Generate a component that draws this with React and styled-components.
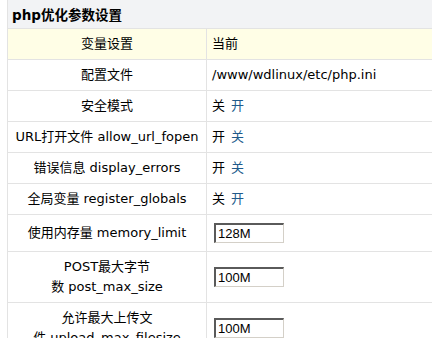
import React from 'react';
import styled, { createGlobalStyle } from 'styled-components';

const GlobalStyle = createGlobalStyle`
html, body {
  margin: 0;
  padding: 0;
  background: #ffffff;
  overflow: hidden;
}
body {
  font-family: "DejaVu Sans", "Noto Sans CJK SC", sans-serif;
  font-size: 13px;
  color: #000000;
}
`;

const Page = styled.div`
padding-left: 7px;
width: 520px;
`;

const Table = styled.table`
border-collapse: collapse;
width: 100%;
border-left: 1px solid #e3e3e3;
`;

const TitleCell = styled.th`
background: #f2f3f5;
height: 28px;
padding: 0 0 0 4px;
text-align: left;
font-size: 13.5px;
font-weight: bold;
border-bottom: 1px solid #e3e3e3;
`;

const Row = styled.tr`
background: ${props => props.head ? '#fffee6' : '#ffffff'};
`;

const Label = styled.td`
width: 190px;
text-align: center;
padding: 5px 4px;
height: 20px;
line-height: 20px;
white-space: nowrap;
border-right: 1px solid #e3e3e3;
border-bottom: 1px solid #e3e3e3;
`;

const Value = styled.td`
text-align: left;
padding: 5px 5px;
line-height: 20px;
border-bottom: 1px solid #e3e3e3;
`;

const Link = styled.a`
color: #215a8a;
text-decoration: none;
margin-left: 6px;
cursor: pointer;
`;

const Field = styled.input`
box-sizing: border-box;
width: 70px;
height: 20px;
margin: 3px 0 3px 2px;
padding: 0 2px;
font-family: "Liberation Sans", Arial, sans-serif;
font-size: 13px;
color: #000;
border-top: 2px solid #5a5a5a;
border-left: 2px solid #5a5a5a;
border-right: 1px solid #d4d0c8;
border-bottom: 1px solid #d4d0c8;
vertical-align: middle;
outline: none;
`;

function Toggle({ on }) {
  return on ? (
    <>开<Link>关</Link></>
  ) : (
    <>关<Link>开</Link></>
  );
}

export default function App() {
  return (
    <>
      <GlobalStyle />
      <Page>
        <Table>
          <thead>
            <tr>
              <TitleCell colSpan={2}>php优化参数设置</TitleCell>
            </tr>
          </thead>
          <tbody>
            <Row head>
              <Label>变量设置</Label>
              <Value>当前</Value>
            </Row>
            <Row>
              <Label>配置文件</Label>
              <Value>/www/wdlinux/etc/php.ini</Value>
            </Row>
            <Row>
              <Label>安全模式</Label>
              <Value><Toggle on={false} /></Value>
            </Row>
            <Row>
              <Label>URL打开文件 allow_url_fopen</Label>
              <Value><Toggle on /></Value>
            </Row>
            <Row>
              <Label>错误信息 display_errors</Label>
              <Value><Toggle on /></Value>
            </Row>
            <Row>
              <Label>全局变量 register_globals</Label>
              <Value><Toggle on={false} /></Value>
            </Row>
            <Row>
              <Label>使用内存量 memory_limit</Label>
              <Value><Field defaultValue="128M" /></Value>
            </Row>
            <Row>
              <Label>POST最大字节<br />数 post_max_size</Label>
              <Value><Field defaultValue="100M" /></Value>
            </Row>
            <Row>
              <Label>允许最大上传文<br />件 upload_max_filesize</Label>
              <Value><Field defaultValue="100M" /></Value>
            </Row>
          </tbody>
        </Table>
      </Page>
    </>
  );
}
